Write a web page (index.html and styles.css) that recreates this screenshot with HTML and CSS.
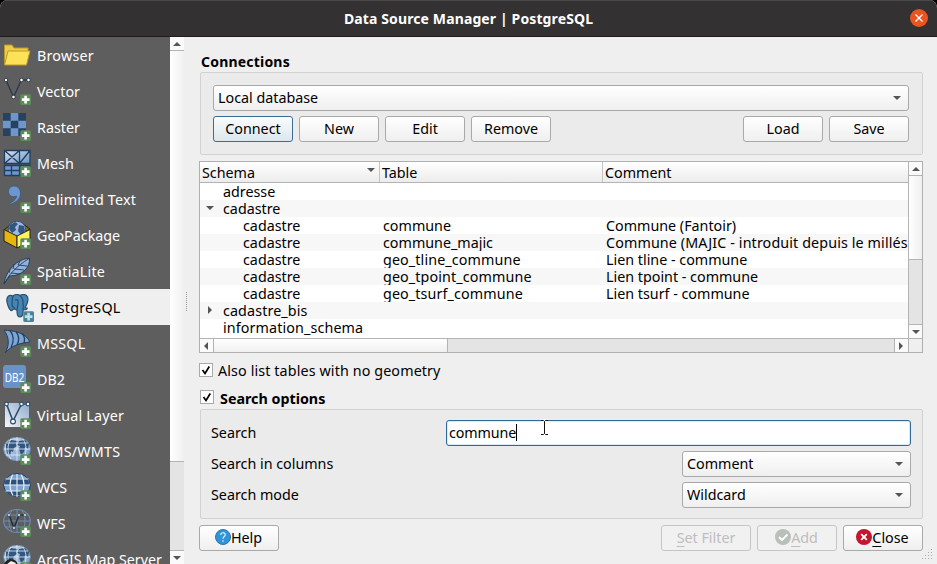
FILE: index.html
```html
<!DOCTYPE html>
<html lang="en">
<head>
<meta charset="utf-8">
<title>Data Source Manager | PostgreSQL</title>
<link rel="stylesheet" href="styles.css">
</head>
<body>
<svg width="0" height="0" class="defs" aria-hidden="true">
  <defs>
    <linearGradient id="blue" x1="0" y1="0" x2="1" y2="1"><stop offset="0" stop-color="#d5e2f0"/><stop offset="1" stop-color="#6b93c4"/></linearGradient>
    <linearGradient id="pale" x1="0" y1="1" x2="1" y2="0"><stop offset="0" stop-color="#f4f7fa"/><stop offset="1" stop-color="#8fa9c8"/></linearGradient>
    <symbol id="plus" viewBox="0 0 28 28"><rect x="17.3" y="17.3" width="10.7" height="10.7" rx="1.5" fill="#5b8c5a"/><path d="M22.6 18.8v7.7M18.8 22.6h7.7" stroke="#fff" stroke-width="2.6"/></symbol>
    <symbol id="globe" viewBox="0 0 28 28"><ellipse cx="14" cy="12" rx="13.3" ry="11.8" fill="url(#blue)" stroke="#6f8fb5"/><path d="M3 6l5-3 7 1-2 3 1 2-3 2-1 4-2-1-1 6-3-4-1-5zM16 4l6-1 4 4-1 5-3-2-1 5-3 3-2-6 1-3-3-1z" fill="#33567f"/><path d="M1 12h26M3 6h22M3 18h22M14 0v24M8 2c-4 6-4 14 0 20M20 2c4 6 4 14 0 20" fill="none" stroke="#e5eef7" stroke-width=".8"/></symbol>
  </defs>
</svg>
<div class="window">
  <header class="titlebar">
    <h1>Data Source Manager | PostgreSQL</h1>
    <span class="win-close"><svg width="18" height="18" viewBox="0 0 18 18"><circle cx="9" cy="9" r="9" fill="#e95420"/><path d="M5.5 5.5l7 7M12.5 5.5l-7 7" stroke="#fff" stroke-width="1.4"/></svg></span>
  </header>
  <div class="content">
    <nav class="sidebar">
      <ul>
        <li><svg viewBox="0 0 28 28"><path d="M1.5 23V4h7.5l2 3H25v4" fill="#f0cb45" stroke="#b99b2c"/><path d="M1.5 24L5 10h22L23.500 24z" fill="#fde157" stroke="#b99b2c"/></svg><span class="loose">Browser</span></li>
        <li><svg viewBox="0 0 28 28"><path d="M3 3l7.500 17L18.500 3h7" fill="none" stroke="#2b3a4c" stroke-width="1.4"/><g fill="#fff" stroke="#2b3a4c"><circle cx="3" cy="3" r="1.8"/><circle cx="10.500" cy="20" r="1.8"/><circle cx="18.500" cy="3" r="1.8"/><circle cx="25.500" cy="3" r="1.8"/></g><use href="#plus"/></svg><span>Vector</span></li>
        <li><svg viewBox="0 0 28 28"><path d="M0 0h23v23H0z" fill="#6d97cb"/><path d="M0 0h7.700v7.700H0zM15.300 0H23v7.700h-7.700zM7.700 7.700h7.600v7.600H7.700zM0 15.300h7.700V23H0zM15.300 15.300H23V23h-7.700z" fill="#28415f"/><use href="#plus"/></svg><span>Raster</span></li>
        <li><svg viewBox="0 0 28 28"><path d="M1.500 1.500h15v13h-15zM16.500 1.500H27v13H16.500z" fill="url(#blue)"/><path d="M1.500 16.500h15v10h-15zM18 16.500h9v10h-9z" fill="#6d97cb"/><path d="M1.500 1.500h15v13h-15zM16.500 1.500H27v13H16.500zM1.500 1.500l15 13M16.500 1.500l-15 13M27 1.500l-10.500 13M1.500 16.500H27v10H1.500zM1.500 21.500h15M8.500 16.500v10M16.500 15v12" fill="none" stroke="#203f61" stroke-width="1.3"/><use href="#plus"/></svg><span>Mesh</span></li>
        <li><svg viewBox="0 0 28 28"><path d="M6 18.500C12 16 13.500 13 13.500 11c-4 2-8-.5-8-4.500C5.500 3 8 1 11 1c4 0 6.500 3 6.500 7.500C17.500 14 13 18 6 19.500z" fill="#6d97cb" stroke="#355b85" stroke-width=".8"/><use href="#plus"/></svg><span class="loose">Delimited Text</span></li>
        <li><svg viewBox="0 0 28 28"><path d="M1 9l6-5 13-1 7 5-12 7z" fill="#8b6d00" stroke="#222"/><circle cx="14" cy="9" r="8.800" fill="#9db9dd" stroke="#35557c"/><path d="M7 4l5-3 3 2-3 3 1 3-4 3-3-4zM16 4l5 1 1 5-4 4-3-4z" fill="#33567f"/><path d="M1 8.500l13 6.500v12L1 20z" fill="#e3b50e" stroke="#222"/><path d="M14 15l13-6.500V20l-13 7z" fill="#fff45e" stroke="#222"/><use href="#plus"/></svg><span>GeoPackage</span></li>
        <li><svg viewBox="0 0 28 28"><path d="M1 27C2 18 10 3 26.500 1c1 9-7 18-20 18z" fill="#91b1d8" stroke="#243f5d"/><path d="M1 27C6 17 14 9 26 1.500M8 16l9 1M11 12l10 1M15 8l9 1M6 16l1-4M10 12l1-5M15 8l2-4" fill="none" stroke="#243f5d" stroke-width=".9"/><use href="#plus"/></svg><span class="loose">SpatiaLite</span></li>
        <li class="selected"><svg viewBox="0 0 28 28"><path d="M7 2C3 0 0 3 1 8c.8 4.500 3 9 5 8.500l2-2c1.500 1.500 2.500 1 3 2 0 4 .5 6.500 3 6.300 3 0 3-2.800 3.200-7.300 3 .5 4-.3 4-1.300l-2-.8C22 9 23 3.500 20.500 1.500 18 0 15.500.5 14 1.500 12 .3 9 .3 7 2z" fill="#4684b2" stroke="#28506f" stroke-width="1.200"/><path d="M7 2C5.500 6 6.500 9 6 12l2.500 2M14 1.500c3 3 3.500 5 3 8 .5 2 .5 3.500 0 6M9 6c2-1 3.500 0 3 3-.3 2-.5 5-1 7" fill="none" stroke="#28506f" stroke-width="1.200"/><rect x="17.300" y="17.300" width="10.700" height="10.700" rx="1.500" fill="#4f8291"/><path d="M22.600 18.800v7.700M18.800 22.600h7.700" stroke="#b8e2ee" stroke-width="2.600"/></svg><span class="loose">PostgreSQL</span></li>
        <li><svg viewBox="0 0 28 28"><path d="M1 1c10 1 21 2 26 12-9 1-18 3-25 11C7 16 6 8 1 1z" fill="#7da4d3" stroke="#203f61"/><path d="M7 1.500c4 5 4 11 1 17M13 2.500c3 4 4 8 1 13.500M19 4.500c3 3 3 6 2 9.500" fill="none" stroke="#203f61" stroke-width="1.300"/><use href="#plus"/></svg><span class="loose">MSSQL</span></li>
        <li><svg viewBox="0 0 28 28"><rect width="23" height="23" rx="3" fill="#6793c9"/><text x="11.500" y="16.500" class="db2" text-anchor="middle" textLength="19.500" lengthAdjust="spacingAndGlyphs">DB2</text><use href="#plus"/></svg><span>DB2</span></li>
        <li><svg viewBox="0 0 28 28"><path d="M2 2h24v24H2z" fill="url(#pale)"/><path d="M3.500 3l6.500 17L18.500 3h7" fill="none" stroke="#2d4e73" stroke-width="1.600"/><g fill="#fff" stroke="#2d4e73" stroke-width="1.200"><circle cx="3.500" cy="3" r="1.800"/><circle cx="10" cy="20.500" r="2.400"/><circle cx="18.500" cy="3" r="1.800"/><circle cx="25" cy="3" r="1.800"/></g><use href="#plus"/></svg><span class="loose">Virtual Layer</span></li>
        <li><svg viewBox="0 0 28 28"><use href="#globe"/><use href="#plus"/></svg><span class="loose">WMS/WMTS</span></li>
        <li><svg viewBox="0 0 28 28"><ellipse cx="14" cy="12" rx="13.300" ry="11.500" fill="#7da3d2" stroke="#243f5d"/><path d="M3 5.500h22l1.500 6.500h-25z" fill="#2f5078"/><path d="M3 18h22l-5 4H8z" fill="#2f5078"/><path d="M2.500 6h23M1 12h26M2.500 18h23M14 1v23M10 1.500c-4 6-4 15 0 21M18 1.500c4 6 4 15 0 21" fill="none" stroke="#e8f0f8" stroke-width="1.100"/><use href="#plus"/></svg><span>WCS</span></li>
        <li><svg viewBox="0 0 28 28"><ellipse cx="14" cy="12" rx="13.300" ry="11.500" fill="none" stroke="#6b8cb3" stroke-width="1.200"/><path d="M2.500 6h23M1 12h26M2.500 18h23M14 1v23M9 1.500c-4 6-4 15 0 21M19 1.500c4 6 4 15 0 21" fill="none" stroke="#6b8cb3"/><path d="M6 6l5 13 5-13h6" fill="none" stroke="#202c3a" stroke-width="1.400"/><g fill="#fff" stroke="#202c3a" stroke-width=".6"><circle cx="6" cy="6" r="1.400"/><circle cx="11" cy="19" r="1.400"/><circle cx="16" cy="6" r="1.400"/><circle cx="22" cy="6" r="1.400"/></g><use href="#plus"/></svg><span>WFS</span></li>
        <li><svg viewBox="0 0 28 28"><use href="#globe"/><circle cx="8" cy="21" r="7" fill="#222"/><path d="M3 20l5-4 5 2-2 3-5 1z" fill="#eee"/><use href="#plus"/></svg><span>ArcGIS Map Server</span></li>
      </ul>
    </nav>
    <div class="vbar side-bar"><i class="btn-s"><b class="tri up"></b></i><i class="thumb"></i><i class="groove"></i><i class="btn-s"><b class="tri down"></b></i></div>
    <div class="splitter"></div>
    <main>
      <h2>Connections</h2>
      <section class="group connections">
        <div class="combo"><span>Local database</span><b class="tri down"></b></div>
        <div class="buttons">
          <button class="focus">Connect</button><button>New</button><button>Edit</button><button>Remove</button>
          <span class="spacer"></span>
          <button>Load</button><button>Save</button>
        </div>
      </section>
      <section class="tree">
        <div class="table">
          <div class="row head"><span>Schema<b class="tri down"></b></span><span>Table</span><span>Comment</span></div>
          <div class="row"><span class="l1">adresse</span></div>
          <div class="row"><span class="l1"><b class="tri down"></b>cadastre</span></div>
          <div class="row"><span class="l2">cadastre</span><span>commune</span><span>Commune (Fantoir)</span></div>
          <div class="row"><span class="l2">cadastre</span><span>commune_majic</span><span class="loose-s">Commune (MAJIC - introduit depuis le millés</span></div>
          <div class="row"><span class="l2">cadastre</span><span class="loose-s">geo_tline_commune</span><span>Lien tline - commune</span></div>
          <div class="row"><span class="l2">cadastre</span><span class="loose-s">geo_tpoint_commune</span><span>Lien tpoint - commune</span></div>
          <div class="row"><span class="l2">cadastre</span><span class="loose-s">geo_tsurf_commune</span><span>Lien tsurf - commune</span></div>
          <div class="row"><span class="l1 loose-s">
            <b class="tri right"></b>cadastre_bis</span></div>
          <div class="row"><span class="l1 loose-s">information_schema</span></div>
        </div>
        <div class="vbar tree-v"><i class="btn-s"><b class="tri up"></b></i><i class="thumb"></i><i class="groove"></i><i class="btn-s"><b class="tri down"></b></i></div>
        <div class="hbar"><i class="btn-s"><b class="tri left"></b></i><i class="thumb"></i><i class="groove"></i><i class="btn-s"><b class="tri right"></b></i></div>
        <div class="corner"></div>
      </section>
      <label class="check also"><svg viewBox="0 0 14 14"><rect x=".5" y=".5" width="13" height="13" fill="#fff" stroke="#aaa"/><path d="M3.500 7L6 10.500 10.300 3.500" fill="none" stroke="#000" stroke-width="1.700"/></svg><span class="loose-s">Also list tables with no geometry</span></label>
      <label class="check opts"><svg viewBox="0 0 14 14"><rect x=".5" y=".5" width="13" height="13" fill="#fff" stroke="#aaa"/><path d="M3.500 7L6 10.500 10.300 3.500" fill="none" stroke="#000" stroke-width="1.700"/></svg><span>Search options</span></label>
      <section class="group search">
        <div class="field"><span>Search</span><div class="edit"><span>commune</span><svg class="ibeam" viewBox="0 0 9 17"><path d="M1 1.500h2.500l1 1 1-1H8M4.500 2.500v12M1 15.500h2.500l1-1 1 1H8" fill="none" stroke="#fff" stroke-width="2.400"/><path d="M1 1.500h2.500l1 1 1-1H8M4.500 2.500v12M1 15.500h2.500l1-1 1 1H8" fill="none" stroke="#111"/></svg></div></div>
        <div class="field"><span>Search in columns</span><div class="combo"><span>Comment</span><b class="tri down"></b></div></div>
        <div class="field"><span>Search mode</span><div class="combo"><span>Wildcard</span><b class="tri down"></b></div></div>
      </section>
      <footer>
        <button><svg viewBox="0 0 16 16"><circle cx="8" cy="8" r="7.500" fill="#3294d8" stroke="#2378b5"/><path d="M5.700 6c0-3 4.600-3 4.600-.2C10.300 7.500 8 7.600 8 9.700M8 11.300v1.500" fill="none" stroke="#d8efff" stroke-width="1.200"/></svg><span>Help</span></button>
        <span class="spacer"></span>
        <button class="disabled wide"><span><u>S</u>et Filter</span></button>
        <button class="disabled"><svg viewBox="0 0 16 16"><circle cx="8" cy="8" r="8" fill="#b9c0bb"/><path d="M4 8l3 3 5.500-5.500" fill="none" stroke="#fff" stroke-width="1.800"/></svg><span><u>A</u>dd</span></button>
        <button><svg viewBox="0 0 16 16"><circle cx="8" cy="8" r="8" fill="#c4162e"/><path d="M5.200 5.200l5.600 5.600M10.800 5.200l-5.600 5.600" stroke="#fff" stroke-width="1.900"/></svg><span><u>C</u>lose</span></button>
      </footer>
      <svg class="grip" viewBox="0 0 12 12"><g fill="#aaa"><path d="M10 0h1v1h-1zM7 3h1v1H7zM10 3h1v1h-1zM4 6h1v1H4zM7 6h1v1H7zM10 6h1v1h-1zM1 9h1v1H1zM4 9h1v1H4zM7 9h1v1H7zM10 9h1v1h-1z"/></g></svg>
    </main>
  </div>
</div>
</body>
</html>
```
FILE: styles.css
```css
* { box-sizing: border-box; }
body { margin: 0; background: #000; font: 14.3px/17px "Noto Sans", "Open Sans", sans-serif; color: #000; overflow: hidden; }
.defs { position: absolute; }
.window { width: 937px; height: 564px; display: flex; flex-direction: column; background: #efefef; border-radius: 8px 8px 0 0; overflow: hidden; white-space: nowrap; }
.loose { letter-spacing: .22px; }
.loose-s { letter-spacing: .12px; }
.titlebar { flex: 0 0 37px; display: grid; grid-template-columns: 27px 1fr 27px; align-items: center; background: #333131; border-top: 1px solid #4b4949; border-bottom: 1px solid #1f1d1d; color: #fff; }
.titlebar h1 { grid-column: 2; margin: 0; font-size: 14px; text-align: center; letter-spacing: .12px; }
.win-close { height: 19px; }
.win-close svg { display: block; }
.content { flex: 1; min-height: 0; display: flex; }

.sidebar { width: 170px; background: #5e5e5e; overflow: hidden; color: #fff; }
.sidebar ul { list-style: none; margin: 0; padding: 0; }
.sidebar li { height: 36px; padding: 0 0 0 3px; display: flex; align-items: center; gap: 6px; }
.sidebar li svg { width: 28px; height: 28px; flex: none; }
.sidebar li.selected { background: #efefef; color: #000; padding-left: 6px; }
.sidebar li.selected svg { margin-top: 2px; }
.db2 { font: 13px "Noto Sans", sans-serif; fill: #fff; }

.tri { display: block; width: 0; height: 0; flex: none; }
.tri.down { border: 4px solid transparent; border-top: 4px solid #555; border-bottom: 0; }
.tri.up { border: 4px solid transparent; border-bottom: 4px solid #555; border-top: 0; }
.tri.right { border: 4px solid transparent; border-left: 4px solid #555; border-right: 0; }
.tri.left { border: 4px solid transparent; border-right: 4px solid #555; border-left: 0; }

.btn-s { display: flex; align-items: center; justify-content: center; flex: 0 0 13px; background: #fafafa; }
.vbar { display: flex; flex-direction: column; width: 14px; }
.vbar .thumb { background: linear-gradient(90deg, #fff, #f0f0f0); border: solid #b4b4b4; border-width: 1px 0; }
.groove { flex: 1; background: #e4e4e4; }
.vbar .btn-s:last-child { border-top: 1px solid #b4b4b4; flex-basis: 14px; }
.side-bar .thumb { flex: none; height: 412px; }
.splitter { width: 5px; height: 19px; margin: 255px 1px 0 -2px; border-right: 1px dotted #999; }

main { flex: 1; padding: 15px 14px 0 11px; display: flex; flex-direction: column; position: relative; }
h2 { margin: 0 0 2px 2px; height: 18px; font-size: 14px; line-height: 20px; letter-spacing: .2px; }
.group { margin-left: 1px; background: #ebebeb; border: 1px solid #d2d2d2; border-radius: 2px; }
.connections { height: 83px; padding: 12px 13px 0 12px; }
.combo { height: 26px; display: flex; align-items: center; justify-content: space-between; border: 1px solid #a9a9a9; border-radius: 3px; background: linear-gradient(#fff, #efefef); padding: 0 7px 1px 4px; }
.buttons { display: flex; gap: 6px; margin-top: 5px; }
.spacer { flex: 1; margin: 0 -3px; }
button { width: 80px; height: 26px; padding: 0 0 2px; font: inherit; color: #000; border: 1px solid #a9a9a9; border-radius: 3px; background: linear-gradient(#fff, #efefef); display: flex; align-items: center; justify-content: center; }
button.focus { border-color: #3b6d93; background: linear-gradient(#fafcfd, #dde6ec); }
button svg { width: 16px; height: 16px; margin-left: -1px; }
button.wide { width: 90px; }
button.disabled { color: #bebebe; border-color: #c6c6c6; background: #f1f1f1; }
u { text-underline-offset: 3px; text-decoration-thickness: 1px; }

.tree { height: 192px; margin-top: 6px; border: 1px solid #b0b0b0; background: #fff; display: grid; grid-template: 176px 14px / 708px 14px; }
.table { overflow: hidden; }
.row { display: grid; grid-template-columns: 180px 223px 305px; height: 17px; overflow: hidden; }
.row:nth-child(odd) { background: #f7f7f7; }
.row span { padding-left: 3px; display: flex; align-items: center; }
.row span:first-child { padding-left: 0; }
.row .l1 { padding-left: 23px !important; position: relative; }
.row .l2 { padding-left: 43px !important; }
.l1 .tri { position: absolute; left: 6px; top: 6px; }
.l1 .tri.right { left: 8px; top: 4px; }
.row.head { height: 21px; background: linear-gradient(#fff, #ececec); border-bottom: 1px solid #b4b4b4; }
.head span { border-right: 1px solid #c4c4c4; padding-left: 2px !important; justify-content: space-between; }
.head span:last-child { border-right: 0; }
.head .tri { margin: -4px 4px 0 0; }
.tree-v { border-left: 1px solid #b4b4b4; }
.tree-v .thumb { flex: 0 0 85px; }
.hbar { display: flex; border-top: 1px solid #b4b4b4; }
.hbar .thumb { width: 235px; border: solid #b4b4b4; border-width: 0 1px; background: linear-gradient(#fff, #f0f0f0); }
.hbar .btn-s:last-child { border-left: 1px solid #b4b4b4; flex-basis: 14px; }
.hbar .tri { margin-right: 1px; }
.corner { background: #efefef; border: solid #b4b4b4; border-width: 1px 0 0 1px; }

.check { display: flex; align-items: center; gap: 5px; height: 18px; }
.check svg { width: 14px; height: 14px; }
.also { margin-top: 8px; }
.opts { margin: 10px 0 0 1px; gap: 6px; font-weight: bold; }
.opts svg { margin-top: -2px; }
.search { height: 110px; margin-top: 2px; padding: 10px 11px 0 10px; display: flex; flex-direction: column; gap: 5px; }
.field { display: flex; justify-content: space-between; align-items: center; }
.field > span { margin-top: -2px; }
.field .combo { width: 229px; }
.edit { width: 465px; height: 26px; border: 1px solid #2f6a9b; border-radius: 3px; background: #fff; display: flex; align-items: center; padding: 0 0 1px 2px; position: relative; box-shadow: inset 0 0 0 1px #dcebf5; }
.edit span { border-right: 1px solid #000; letter-spacing: -.1px; }
.ibeam { position: absolute; left: 93px; top: -2px; width: 9px; height: 17px; }
footer { display: flex; gap: 6px; margin-top: 6px; }
.grip { position: absolute; right: 4px; bottom: 3px; width: 12px; height: 12px; }
```
